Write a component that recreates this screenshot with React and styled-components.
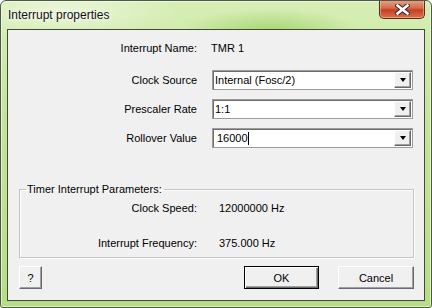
import React from 'react';
import styled, { createGlobalStyle } from 'styled-components';

const GlobalStyle = createGlobalStyle`
  html, body {
    margin: 0;
    padding: 0;
    background: #ffffff;
  }
  * {
    box-sizing: border-box;
  }
`;

const Window = styled.div`
  width: 432px;
  height: 308px;
  display: flex;
  flex-direction: column;
  border: 1px solid #4b5a43;
  border-radius: 6px 6px 3px 3px;
  background:
    radial-gradient(ellipse 90px 22px at 270px 30px, rgba(140, 200, 80, 0.6), transparent),
    radial-gradient(ellipse 120px 30px at 60px 10px, rgba(255, 255, 255, 0.5), transparent),
    linear-gradient(180deg, #d6eeb4 0%, #c4e49a 40%, #b6dd86 100%);
  box-shadow: inset 0 0 0 1px rgba(255, 255, 255, 0.55);
  font-family: 'Liberation Sans', Arial, sans-serif;
  font-size: 11px;
  color: #000;
  overflow: hidden;
`;

const TitleBar = styled.div`
  height: 28px;
  flex: none;
  display: flex;
  align-items: flex-start;
  justify-content: space-between;
  padding: 0 6px 0 7px;
`;

const Title = styled.span`
  margin-top: 7px;
  font-size: 12px;
  color: #111;
  text-shadow: 0 0 6px rgba(255, 255, 255, 0.95), 0 0 3px rgba(255, 255, 255, 0.9);
`;

const CloseButton = styled.div`
  width: 46px;
  height: 19px;
  margin-top: -1px;
  display: flex;
  align-items: center;
  justify-content: center;
  border: 1px solid #5e2a1e;
  border-top: none;
  border-radius: 0 0 5px 5px;
  background: linear-gradient(180deg, #e8a48c 0%, #d46a4a 45%, #c4401f 55%, #d8714f 100%);
  box-shadow: inset 0 0 0 1px rgba(255, 220, 200, 0.45);
`;

const Client = styled.div`
  flex: 1;
  margin: 0 6px 6px 6px;
  border: 1px solid #3f4b38;
  background: #f0f0f0;
  display: flex;
  flex-direction: column;
  padding: 0 10px 0 11px;
`;

const Form = styled.div`
  display: flex;
  flex-direction: column;
  gap: 9px;
  padding-top: 8px;
`;

const Row = styled.div`
  display: grid;
  grid-template-columns: ${({ $labelWidth }) => $labelWidth}px 1fr;
  column-gap: ${({ $gap }) => $gap}px;
  align-items: center;
  height: ${({ $height }) => $height}px;
  margin-bottom: ${({ $after }) => $after || 0}px;
`;

const Label = styled.span`
  text-align: right;
  white-space: nowrap;
`;

const Value = styled.span`
  white-space: nowrap;
`;

const Combo = styled.div`
  width: 201px;
  height: 20px;
  display: flex;
  align-items: center;
  border: 1px solid #9c9c9c;
  box-shadow: inset 1px 1px 0 #6e6e6e;
  background: #fff;
  padding: 1px 1px 1px ${({ $editable }) => ($editable ? 4 : 2)}px;
`;

const ComboText = styled.span`
  flex: 1;
  display: flex;
  align-items: center;
  white-space: nowrap;
`;

const Caret = styled.span`
  display: inline-block;
  width: 1px;
  height: 13px;
  background: #000;
`;

const ArrowButton = styled.div`
  width: 17px;
  height: 16px;
  display: flex;
  align-items: center;
  justify-content: center;
  background: #f0f0f0;
  border: 1px solid;
  border-color: #ffffff #696969 #696969 #ffffff;
  box-shadow: inset -1px -1px 0 #a0a0a0;
`;

const Triangle = styled.span`
  width: 0;
  height: 0;
  border-left: 3.5px solid transparent;
  border-right: 3.5px solid transparent;
  border-top: 4px solid #000;
`;

const Group = styled.fieldset`
  margin: 35px 0 0 0;
  padding: 6px 0 8px 0;
  border: 1px solid #c4c4c4;
  box-shadow: 1px 1px 0 #ffffff, inset 1px 1px 0 #ffffff;
  display: flex;
  flex-direction: column;
  gap: 22px;
  min-width: 0;
`;

const Legend = styled.legend`
  padding: 0 2px 0 1px;
  margin-left: 6px;
`;

const ButtonRow = styled.div`
  display: flex;
  align-items: center;
  margin-top: 8px;
`;

const Spacer = styled.div`
  flex: 1;
`;

const Button = styled.div`
  width: ${({ $width }) => $width}px;
  height: 23px;
  margin-left: ${({ $ml }) => $ml || 0}px;
  display: flex;
  align-items: center;
  justify-content: center;
  background: #f0f0f0;
  border: 1px solid;
  border-color: ${({ $default }) =>
    $default ? '#000' : '#ffffff #696969 #696969 #ffffff'};
  box-shadow: ${({ $default }) =>
    $default
      ? 'inset 1px 1px 0 #ffffff, inset -1px -1px 0 #696969, inset -2px -2px 0 #a0a0a0'
      : 'inset -1px -1px 0 #a0a0a0'};
`;

function CloseGlyph() {
  return (
    <svg width="15" height="11" viewBox="0 0 15 11">
      <path
        d="M2.5 1.5 L12.5 9.5 M12.5 1.5 L2.5 9.5"
        stroke="#3a2a26"
        strokeWidth="4.6"
        strokeLinecap="square"
      />
      <path
        d="M2.5 1.5 L12.5 9.5 M12.5 1.5 L2.5 9.5"
        stroke="#ffffff"
        strokeWidth="2.6"
        strokeLinecap="square"
      />
    </svg>
  );
}

function ComboBox({ value, editable }) {
  return (
    <Combo $editable={editable}>
      <ComboText>
        {value}
        {editable && <Caret />}
      </ComboText>
      <ArrowButton>
        <Triangle />
      </ArrowButton>
    </Combo>
  );
}

export default function App() {
  return (
    <>
      <GlobalStyle />
      <Window>
        <TitleBar>
          <Title>Interrupt properties</Title>
          <CloseButton>
            <CloseGlyph />
          </CloseButton>
        </TitleBar>
        <Client>
          <Form>
            <Row $labelWidth={178} $gap={14} $height={20} $after={3}>
              <Label>Interrupt Name:</Label>
              <Value>TMR 1</Value>
            </Row>
            <Row $labelWidth={178} $gap={15} $height={20}>
              <Label>Clock Source</Label>
              <ComboBox value="Internal (Fosc/2)" />
            </Row>
            <Row $labelWidth={178} $gap={15} $height={20}>
              <Label>Prescaler Rate</Label>
              <ComboBox value="1:1" />
            </Row>
            <Row $labelWidth={178} $gap={15} $height={20}>
              <Label>Rollover Value</Label>
              <ComboBox value="16000" editable />
            </Row>
          </Form>
          <Group>
            <Legend>Timer Interrupt Parameters:</Legend>
            <Row $labelWidth={177} $gap={22} $height={13}>
              <Label>Clock Speed:</Label>
              <Value>12000000 Hz</Value>
            </Row>
            <Row $labelWidth={177} $gap={22} $height={13}>
              <Label>Interrupt Frequency:</Label>
              <Value>375.000 Hz</Value>
            </Row>
          </Group>
          <ButtonRow>
            <Button $width={23}>?</Button>
            <Spacer />
            <Button $width={75} $default>OK</Button>
            <Button $width={76} $ml={19}>Cancel</Button>
          </ButtonRow>
        </Client>
      </Window>
    </>
  );
}
